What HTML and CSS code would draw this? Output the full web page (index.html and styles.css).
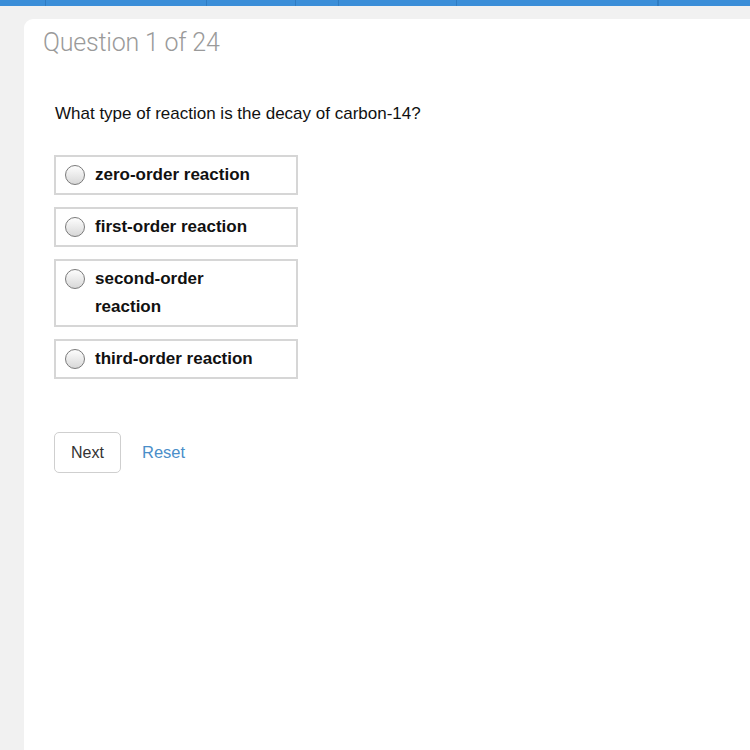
FILE: index.html
```html
<!DOCTYPE html>
<html lang="en">
<head>
    <meta charset="UTF-8">
    <title>Question 1 of 24</title>
    <link rel="stylesheet" href="styles.css">
</head>
<body>
    <div class="topbar">
        <span class="tab t1"></span>
        <span class="tab t2"></span>
        <span class="tab t3"></span>
        <span class="tab t4"></span>
        <span class="tab t5"></span>
        <span class="tab t6"></span>
        <span class="tab t7"></span>
    </div>
    <div class="page">
        <div class="card">
            <h2 class="count">Question 1 of 24</h2>
            <p class="question">What type of reaction is the decay of carbon-14?</p>
            <div class="choices">
                <label class="choice"><span class="radio"></span><span class="label">zero-order reaction</span></label>
                <label class="choice"><span class="radio"></span><span class="label">first-order reaction</span></label>
                <label class="choice"><span class="radio"></span><span class="label">second-order<br>reaction</span></label>
                <label class="choice"><span class="radio"></span><span class="label">third-order reaction</span></label>
            </div>
            <div class="actions">
                <button class="btn-next">Next</button>
                <a class="reset" href="#">Reset</a>
            </div>
        </div>
    </div>
</body>
</html>
```

FILE: styles.css
```css
body {
    margin: 0;
    background: #f1f1f1;
    font-family: "Liberation Sans", Arial, sans-serif;
    color: #111;
    height: 750px;
    overflow: hidden;
}
.topbar {
    height: 6px;
    background: #3b8ed8;
    display: flex;
}
.tab {
    height: 6px;
    border-right: 1px solid #2f7cc2;
}
.t1 { width: 45px; }
.t2 { width: 160px; }
.t3 { width: 88px; }
.t4 { width: 42px; }
.t5 { width: 117px; }
.t6 { width: 200px; }
.page {
    padding: 13px 0 0 24px;
}
.card {
    background: #fff;
    border-top-left-radius: 9px;
    height: 740px;
    padding: 0 0 0 19px;
}
.count {
    margin: 0;
    padding-top: 9px;
    font-family: Roboto, "Liberation Sans", sans-serif;
    font-weight: 300;
    font-size: 25px;
    color: #9a9a9a;
    letter-spacing: -0.2px;
}
.question {
    margin: 45px 0 0 12px;
    font-size: 17px;
    line-height: 24px;
}
.choices {
    margin: 29px 0 0 11px;
    display: flex;
    flex-direction: column;
    gap: 12px;
    width: 244px;
}
.choice {
    display: flex;
    align-items: flex-start;
    border: 2px solid #d6d6d6;
    padding: 4px 6px 4px 9px;
    font-weight: bold;
    font-size: 17px;
    line-height: 28px;
}
.radio {
    width: 18px;
    height: 18px;
    border: 1px solid #7a7a7a;
    border-radius: 50%;
    background: linear-gradient(#fdfdfd, #d8d8d8);
    margin: 4px 10px 0 0;
    flex-shrink: 0;
}
.actions {
    margin: 53px 0 0 11px;
    display: flex;
    align-items: center;
    gap: 21px;
}
.btn-next {
    font-family: "Liberation Sans", Arial, sans-serif;
    font-size: 16px;
    color: #333;
    background: #fff;
    border: 1px solid #cfcfcf;
    border-radius: 5px;
    width: 67px;
    height: 41px;
}
.reset {
    font-size: 16.5px;
    color: #4a8ec9;
    text-decoration: none;
}
```
